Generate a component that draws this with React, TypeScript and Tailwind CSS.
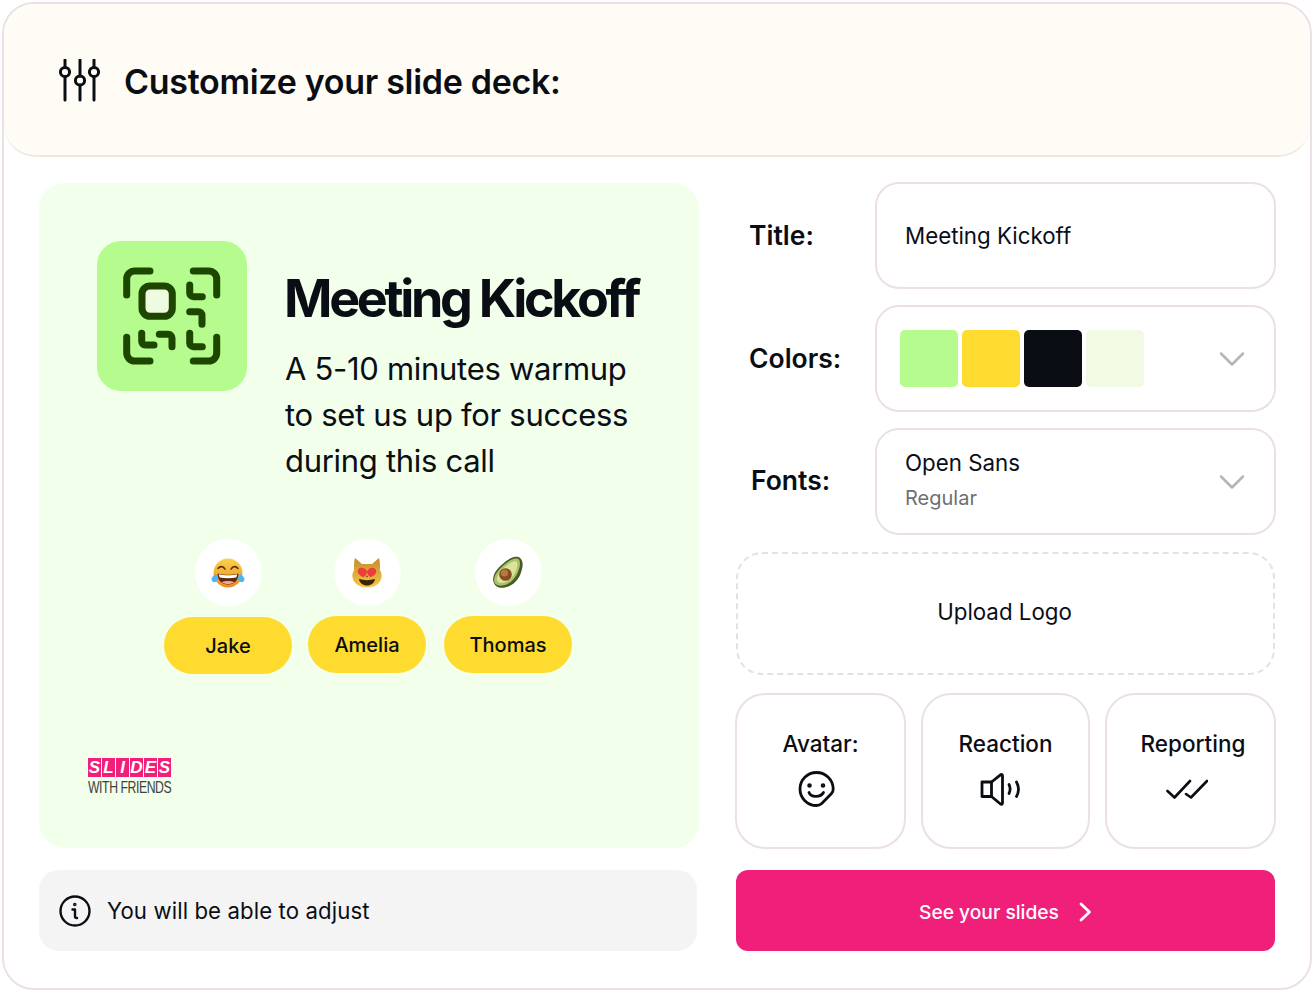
import React from "react";

const Sliders = () => (
  <svg width="44" height="44" viewBox="0 0 44 44" fill="none" stroke="#0a0e14" strokeWidth="3" strokeLinecap="round">
    <path d="M7 1V8M7 18V41M22 1V17M22 26V41M36 1V8M36 18V41" />
    <circle cx="7" cy="13" r="4.6" />
    <circle cx="22" cy="21.5" r="4.6" />
    <circle cx="36" cy="13" r="4.6" />
  </svg>
);

const ScanTile = () => (
  <div className="w-[150px] h-[150px] rounded-[24px] bg-[#b6fb8d] shrink-0">
    <svg width="150" height="150" viewBox="0 0 150 150" fill="none" stroke="#1d4600" strokeWidth="7" strokeLinecap="round" strokeLinejoin="round">
      <path d="M29.7 54V38a8 8 0 0 1 8-8H53" />
      <path d="M96.3 30H111.7a8 8 0 0 1 8 8V54" />
      <path d="M29.7 96.3V112a8 8 0 0 0 8 8H53" />
      <path d="M96.3 120H111.7a8 8 0 0 0 8-8V96.3" />
      <rect x="45" y="45" width="30.3" height="30.3" rx="8" fill="#effbe0" />
      <path d="M92.7 44V52a3.7 3.7 0 0 0 3.7 3.7H105.3" />
      <path d="M92.7 70.7H101.3a3.7 3.7 0 0 1 3.7 3.7V83.3" />
      <path d="M44.7 92.3V100.3a3.7 3.7 0 0 0 3.7 3.7H57" />
      <path d="M62.3 93.3H71.3a3.7 3.7 0 0 1 3.7 3.7V105.7" />
      <path d="M92.7 92.3V102a3.7 3.7 0 0 0 3.7 3.7H105.3" />
    </svg>
  </div>
);

const Laugh = () => (
  <svg width="34" height="32" viewBox="0 0 34 32">
    <defs>
      <linearGradient id="lg1" x1="0" y1="0" x2="0" y2="1">
        <stop offset="0" stopColor="#fbd24a" />
        <stop offset="1" stopColor="#f08a1e" />
      </linearGradient>
    </defs>
    <circle cx="17" cy="16" r="14.5" fill="url(#lg1)" />
    <path d="M7 11.5c2-2.5 5-2.6 7 .6M20 12.1c2-3.2 5-3.1 7-.6" stroke="#5b3410" strokeWidth="1.6" fill="none" strokeLinecap="round" />
    <path d="M6.5 16.5c6 1.7 15 1.7 21 0 0 7-4.5 11-10.500 11s-10.500-4-10.500-11z" fill="#5b2a10" />
    <path d="M7.800 17.200c5.500 1.300 13 1.300 18.400 0-.2 1.500-.5 2.400-1 3.300-5 1-11.400 1-16.400 0-.5-.9-.8-1.800-1-3.300z" fill="#fff" />
    <path d="M10.500 25c3.500 2.800 9.500 2.800 13 0-3.500-1.500-9.500-1.500-13 0z" fill="#f3a49a" />
    <path d="M4.500 17c2 2 3 3.500 2.500 5.500s-3.500 3.500-5.500 2S.5 20 4.500 17z" fill="#4fb4f2" />
    <path d="M29.500 17c-2 2-3 3.500-2.500 5.500s3.500 3.500 5.500 2 1-4.500-3-7.500z" fill="#4fb4f2" />
  </svg>
);

const Cat = () => (
  <svg width="32" height="32" viewBox="0 0 32 32">
    <defs>
      <linearGradient id="lg2" x1="0" y1="0" x2="0" y2="1">
        <stop offset="0" stopColor="#c28d2c" />
        <stop offset="1" stopColor="#f7c744" />
      </linearGradient>
    </defs>
    <path d="M4 1l7 6h10l7-6c1 4 1.300 8 .8 12 1.500 2.500 2 4.500 1.800 6.500C30 26 24 30.500 16 30.500S2 26 1.400 19.500c-.2-2 .3-4 1.800-6.500C2.700 9 3 5 4 1z" fill="url(#lg2)" />
    <path d="M16 14.500c-1-3.500-6.500-5-8.500-2.300-2.200 3 .8 6.500 5 8 2-1.300 3.500-3.300 3.500-5.700zM16 14.500c1-3.500 6.500-5 8.500-2.300 2.200 3-.8 6.500-5 8-2-1.300-3.500-3.300-3.500-5.700z" fill="#ef3b3b" />
    <path d="M8 22c5 1.500 11 1.500 16 0-.5 4-4 6.500-8 6.500S8.500 26 8 22z" fill="#3b2208" />
    <path d="M14.500 18.800h3L16 20.500z" fill="#7a4a12" />
  </svg>
);

const Avocado = () => (
  <svg width="34" height="34" viewBox="0 0 34 34">
    <path d="M29 2c3.500 3 3 8 1.500 13-2 7-6 12-12 15-5 2.400-11 2.600-14-.5C1 26 1.500 20 5 15 10 8 20 .5 25 .8c1.500 0 3 .2 4 1.200z" fill="#4b5a22" />
    <path d="M27.500 3c2.500 2.500 1.500 8-.5 13-2.300 6-6.500 10.500-11.500 12.500-4.500 1.800-9 1.500-11.200-.8C2 25 3 20 6.500 15.500 11 9.500 19 3 24.500 2.500c1.200-.1 2.200 0 3 .5z" fill="#a5c46a" />
    <path d="M25.500 5.500c1.800 2 .8 6.500-1 10.500-2 4.500-5 8-9.500 10-3.500 1.500-6.500 1.300-8.200-.3-1.800-2-.8-5.500 2-9.200C12.500 11.500 19 6 23.500 5.200c.8-.1 1.500 0 2 .3z" fill="#dbe39b" />
    <circle cx="14.500" cy="18.500" r="6.300" fill="#8a4d20" />
    <circle cx="13.500" cy="17" r="3.600" fill="#b57a42" />
  </svg>
);

const Person = ({ name, w, top, emoji }: { name: string; w: string; top: string; emoji: React.ReactNode }) => (
  <div className={`${w} flex flex-col items-center`}>
    <div className="w-[67px] h-[67px] rounded-full bg-white flex items-center justify-center">{emoji}</div>
    <div className={`${top} w-full h-[57px] rounded-full bg-[#ffdb30] flex items-center justify-center text-[20px] font-medium text-[#0a0e14]`}>
      {name}
    </div>
  </div>
);

const Logo = () => (
  <div className="flex flex-col items-start w-[84px]">
    <div className="flex gap-[1px]">
      {["S", "L", "I", "D", "E", "S"].map((c, i) => (
        <span
          key={i}
          className="w-[13px] h-[19px] bg-[#f0207a] text-white text-[17px] leading-[19px] font-['Liberation_Sans',sans-serif] font-bold italic text-center"
        >
          {c}
        </span>
      ))}
    </div>
    <div className="text-[#3f3f3f] text-[17px] leading-[20px] font-['Liberation_Sans',sans-serif] tracking-[-0.6px] whitespace-nowrap mt-[1px] scale-x-[0.72] origin-left">
      WITH FRIENDS
    </div>
  </div>
);

const Chevron = () => (
  <svg width="26" height="16" viewBox="0 0 26 16" fill="none" stroke="#b5b5b5" strokeWidth="2.500" strokeLinecap="round" strokeLinejoin="round">
    <path d="M2 2.500L13 13.500L24 2.500" />
  </svg>
);

const Row = ({ label, labelClass, children }: { label: string; labelClass?: string; children: React.ReactNode }) => (
  <div className="flex items-center h-[107px]">
    <div className={`w-[125px] text-[26.500px] font-semibold text-[#0a0e14] ${labelClass ?? "pl-[14px]"}`}>{label}</div>
    <div className="ml-[14px] flex-1 h-full border-2 border-[#ebe0e4] rounded-[24px] flex items-center">{children}</div>
  </div>
);

const Feature = ({ label, w, icon, iconClass, labelClass }: { label: string; w: string; icon: React.ReactNode; iconClass: string; labelClass?: string }) => (
  <div className={`${w} h-full border-2 border-[#ebe0e4] rounded-[30px] flex flex-col items-center pt-[34px]`}>
    <div className={`text-[22.500px] leading-[30px] font-medium text-[#0a0e14] ${labelClass ?? ""}`}>{label}</div>
    <div className={`mt-[12px] h-[36px] flex items-center ${iconClass}`}>{icon}</div>
  </div>
);

export default function App() {
  return (
    <div className="w-[1312px] h-[990px] bg-white p-[2px] font-['Inter',sans-serif] text-[#0a0e14]">
      <div className="w-[1310px] h-[988px] border-2 border-[#ebe0e4] rounded-[32px] overflow-hidden">
        <div className="h-[153px] bg-[#fffcf5] border-b-2 border-[#efe8e0] rounded-b-[32px] flex items-center pl-[54px] pt-[3px] gap-[22px]">
          <Sliders />
          <h1 className="text-[34px] font-semibold tracking-[-0.3px]">Customize your slide deck:</h1>
        </div>
        <div className="flex pl-[35px] pt-[26px] gap-[37px]">
          <div className="w-[660px] flex flex-col gap-[22px]">
            <div className="h-[665px] rounded-[26px] bg-[#f1ffeb] pt-[58px] flex flex-col">
              <div className="flex pl-[58px] gap-[38px]">
                <ScanTile />
                <div className="pt-[25px]">
                  <div className="text-[52px] leading-[66px] font-bold tracking-[-3.300px] -ml-[1px]">Meeting Kickoff</div>
                  <div className="text-[31px] leading-[46px] mt-[14px] tracking-[-0.3px] w-[370px]">
                    A 5-10 minutes warmup to set us up for success during this call
                  </div>
                </div>
              </div>
              <div className="flex pl-[125px] gap-[16px] mt-[55px]">
                <Person name="Jake" w="w-[128px]" top="mt-[11px]" emoji={<Laugh />} />
                <Person name="Amelia" w="w-[118px]" top="mt-[10px]" emoji={<Cat />} />
                <div className="ml-[2px]">
                  <Person name="Thomas" w="w-[128px]" top="mt-[10px]" emoji={<Avocado />} />
                </div>
              </div>
              <div className="pl-[49px] mt-[84px]">
                <Logo />
              </div>
            </div>
            <div className="h-[81px] w-[658px] rounded-[20px] bg-[#f4f4f4] flex items-center pl-[20px] gap-[16px]">
              <svg width="32" height="32" viewBox="0 0 32 32" fill="none" stroke="#0a0e14" strokeWidth="2.400" strokeLinecap="round" strokeLinejoin="round">
                <circle cx="16" cy="16" r="14.500" />
                <path d="M13.500 14.500H16V21.500c0 1 .7 1.500 2 1.500" />
                <circle cx="15.800" cy="9.500" r="0.600" fill="#0a0e14" />
              </svg>
              <span className="text-[22.200px] tracking-[0.1px]">You will be able to adjust</span>
            </div>
          </div>
          <div className="w-[540px] flex flex-col -mt-[1px]">
            <div className="flex flex-col gap-[16px]">
              <Row label="Title:" labelClass="pl-[13px]">
                <span className="pl-[28px] text-[22.300px] font-normal">Meeting Kickoff</span>
              </Row>
              <Row label="Colors:" labelClass="pl-[13px]">
                <div className="flex items-center justify-between w-full pl-[23px] pr-[29px]">
                  <div className="flex gap-[4px]">
                    <div className="w-[58px] h-[57px] rounded-[5px] bg-[#b6fb8d]" />
                    <div className="w-[58px] h-[57px] rounded-[5px] bg-[#ffdb30]" />
                    <div className="w-[58px] h-[57px] rounded-[5px] bg-[#0a0e14]" />
                    <div className="w-[58px] h-[57px] rounded-[5px] bg-[#f1fbe3]" />
                  </div>
                  <Chevron />
                </div>
              </Row>
              <Row label="Fonts:" labelClass="pl-[15px] pb-[2px]">
                <div className="flex items-center justify-between w-full pl-[28px] pr-[29px]">
                  <div className="flex flex-col pb-[2px]">
                    <span className="text-[22.300px] leading-[30px]">Open Sans</span>
                    <span className="text-[20px] leading-[30px] mt-[5px] text-[#6d6f73]">Regular</span>
                  </div>
                  <Chevron />
                </div>
              </Row>
            </div>
            <div className="mt-[17px] mr-[1px] h-[123px] border-2 border-dashed border-[#e6e0e2] rounded-[26px] flex items-center justify-center text-[22.300px] pr-[2px] pb-[3px]">
              Upload Logo
            </div>
            <div className="mt-[18px] h-[156px] -ml-[1px] flex gap-[15px]">
              <Feature
                label="Avatar:"
                w="w-[171px]"
                iconClass="mr-[8px]"
                icon={
                  <svg width="37" height="36" viewBox="0 0 37 36" fill="none" stroke="#0a0e14" strokeWidth="2.800" strokeLinecap="round" strokeLinejoin="round">
                    <path d="M18.500 1.500a16.700 16.700 0 0 1 16.700 16.500c0 2-.5 3.300-1.700 4.500L23.500 32.700c-1.500 1.300-3 1.800-5 1.800A16.500 16.500 0 0 1 18.500 1.500z" />
                    <path d="M11 21.500c1.800 5 11.500 5.200 14.500 0" />
                    <circle cx="11.500" cy="14.500" r="0.900" fill="#0a0e14" />
                    <circle cx="25" cy="14.500" r="0.900" fill="#0a0e14" />
                  </svg>
                }
              />
              <Feature
                label="Reaction"
                w="w-[169px]"
                iconClass="mr-[10px]"
                icon={
                  <svg width="41" height="33" viewBox="0 0 41 33" fill="none" stroke="#0a0e14" strokeWidth="2.800" strokeLinecap="round" strokeLinejoin="round">
                    <path d="M11.500 9H2v14.500h9.500" />
                    <path d="M11.500 9L20.500 1.800c1-.6 2-.2 2 1V30c0 1.200-1 1.600-2 1L11.500 23.500z" />
                    <path d="M29 11.500c1.500 3 1.500 6 0 9" />
                    <path d="M36.500 9c2.500 4.500 2.500 10 0 14.500" />
                  </svg>
                }
              />
              <Feature
                label="Reporting"
                w="w-[171px]"
                labelClass="ml-[5px]"
                iconClass="mr-[7px]"
                icon={
                  <svg width="42" height="20" viewBox="0 0 42 20" fill="none" stroke="#0a0e14" strokeWidth="2.600" strokeLinecap="round" strokeLinejoin="round">
                    <path d="M1.500 12L8.500 18.500L24 2" />
                    <path d="M20 15L25 18.500L41 2" />
                  </svg>
                }
              />
            </div>
            <div className="mt-[21px] h-[81px] w-[539px] rounded-[12px] bg-[#f0207a] flex items-center justify-center gap-[19px] pt-[3px] text-white text-[19.200px] font-medium">
              <span>See your slides</span>
              <svg width="14" height="20" viewBox="0 0 14 20" fill="none" stroke="#fff" strokeWidth="2.800" strokeLinecap="round" strokeLinejoin="round">
                <path d="M3 2L11.500 10L3 18" />
              </svg>
            </div>
          </div>
        </div>
      </div>
    </div>
  );
}
